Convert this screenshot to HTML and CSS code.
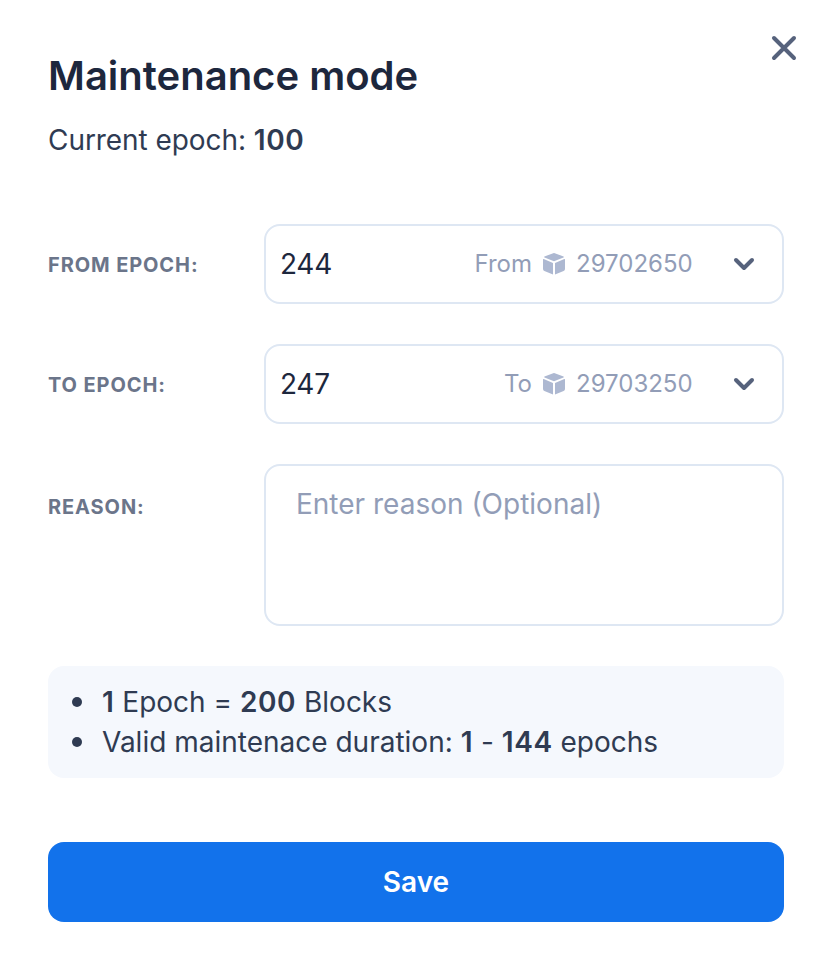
FILE: index.html
```html
<!DOCTYPE html>
<html lang="en">
<head>
<meta charset="utf-8">
<title>Maintenance mode</title>
<link rel="stylesheet" href="styles.css">
</head>
<body>
<main class="modal">
  <button class="close" aria-label="Close"><svg width="28" height="28" viewBox="0 0 28 28"><path d="M4 4L24 24M24 4L4 24"/></svg></button>
  <h1 class="title">Maintenance mode</h1>
  <p class="current">Current epoch: <b>100</b></p>
  <form class="form">
    <div class="row">
      <span class="label">FROM EPOCH:</span>
      <div class="select">
        <span class="value">244</span>
        <span class="hint">From</span>
        <svg class="cube" width="24" height="24" viewBox="0 0 24 24"><path d="M10.500 1.400Q12 0.800 13.500 1.400L21.500 4.500Q22.300 5 21.500 5.500L12 9.300L2.500 5.500Q1.700 5 2.500 4.500ZM1 7.500Q1 6.800 1.700 7.100L11 10.900V22.600L2.400 19.100Q1 18.500 1 17ZM23 7.500Q23 6.800 22.300 7.100L13 10.900V22.600L21.600 19.100Q23 18.500 23 17Z"/></svg>
        <span class="block">29702650</span>
        <svg class="chevron" width="24" height="24" viewBox="0 0 24 24"><path d="M4 8L12 16L20 8"/></svg>
      </div>
    </div>
    <div class="row">
      <span class="label">TO EPOCH:</span>
      <div class="select">
        <span class="value">247</span>
        <span class="hint">To</span>
        <svg class="cube" width="24" height="24" viewBox="0 0 24 24"><path d="M10.500 1.400Q12 0.800 13.500 1.400L21.500 4.500Q22.300 5 21.500 5.500L12 9.300L2.500 5.500Q1.700 5 2.500 4.500ZM1 7.500Q1 6.800 1.700 7.100L11 10.900V22.600L2.400 19.100Q1 18.500 1 17ZM23 7.500Q23 6.800 22.300 7.100L13 10.900V22.600L21.600 19.100Q23 18.500 23 17Z"/></svg>
        <span class="block">29703250</span>
        <svg class="chevron" width="24" height="24" viewBox="0 0 24 24"><path d="M4 8L12 16L20 8"/></svg>
      </div>
    </div>
    <div class="row row-reason">
      <span class="label">REASON:</span>
      <div class="reason">Enter reason (Optional)</div>
    </div>
  </form>
  <ul class="info">
    <li><b>1</b> Epoch = <b>200</b> Blocks</li>
    <li>Valid maintenace duration: <b>1</b> - <b>144</b> epochs</li>
  </ul>
  <button class="save">Save</button>
</main>
</body>
</html>
```
FILE: styles.css
```css
* { box-sizing: border-box; }
body { margin: 0; background: #fff; font-family: Inter, sans-serif; font-weight: 400; color: #2f3b52; }
.modal { position: relative; height: 970px; padding: 48px; }
.close { position: absolute; top: 34px; right: 34px; width: 28px; height: 28px; padding: 0; border: 0; background: none; }
.close svg { display: block; fill: none; stroke: #56627c; stroke-width: 4; stroke-linecap: round; }
.title { margin: 0; font-size: 40px; line-height: 56px; font-weight: 600; color: #1d273d; }
.current { margin: 16px 0 0; font-size: 28px; line-height: 40px; letter-spacing: -0.06px; }
b { font-weight: 600; letter-spacing: 0.6px; }
.form { display: flex; flex-direction: column; gap: 40px; margin-top: 64px; }
.row { display: grid; grid-template-columns: 216px 520px; align-items: center; }
.row-reason { align-items: start; }
.label { padding-top: 2px; font-size: 20px; line-height: 32px; font-weight: 700; letter-spacing: 0.9px; color: #6b758a; }
.row-reason .label { margin-top: 25px; }
.select { display: flex; align-items: center; height: 80px; padding: 0 26px 0 14px; border: 2px solid #dee7f3; border-radius: 16px; }
.value { flex: 1; font-size: 28px; letter-spacing: -0.3px; color: #1d273d; }
.hint, .block { padding-bottom: 2px; font-size: 24px; color: #929db7; }
.cube { margin: 0 10px; fill: #adb8d1; }
.block { width: 116px; }
.chevron { margin-left: 40px; fill: none; stroke: #56627c; stroke-width: 4; stroke-linecap: round; stroke-linejoin: round; }
.reason { height: 162px; padding: 18px 30px; border: 2px solid #dee7f3; border-radius: 16px; font-size: 28px; line-height: 40px; color: #929db7; }
.info { margin: 40px 0 0; height: 112px; padding: 16px 24px 16px 54px; border-radius: 16px; background: #f5f8fd; font-size: 28px; line-height: 40px; list-style: none; }
.info li { position: relative; }
.info li::before { content: ""; position: absolute; left: -30px; top: 15px; width: 10px; height: 10px; border-radius: 50%; background: #2f3b52; }
.save { display: block; width: 100%; height: 80px; margin-top: 64px; border: 0; border-radius: 16px; background: #1272eb; color: #fff; font: 600 28px/40px Inter, sans-serif; }
```
